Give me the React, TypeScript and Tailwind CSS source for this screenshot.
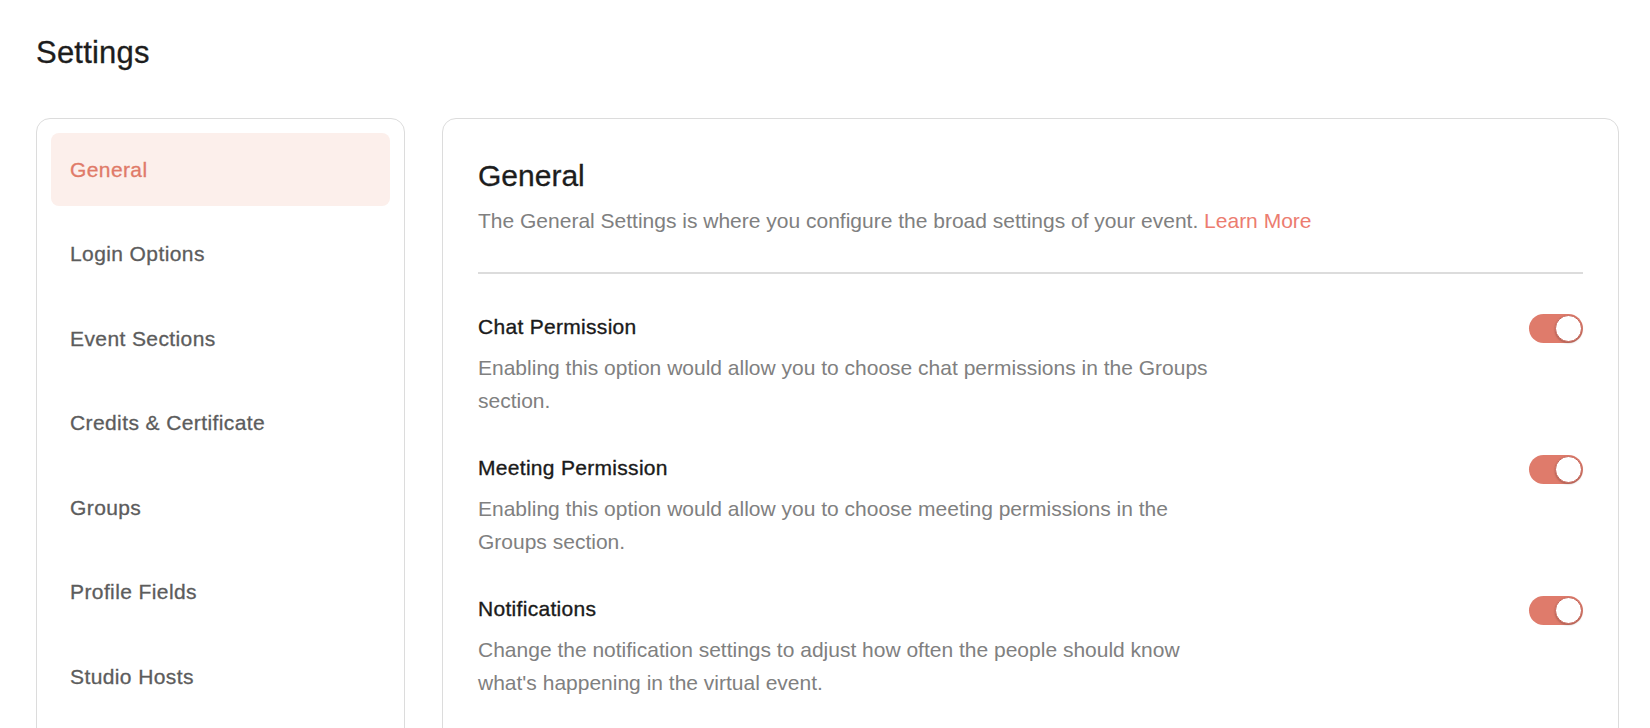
import React from "react";

const menu = [
  "General",
  "Login Options",
  "Event Sections",
  "Credits & Certificate",
  "Groups",
  "Profile Fields",
  "Studio Hosts",
];

const options = [
  {
    title: "Chat Permission",
    desc: "Enabling this option would allow you to choose chat permissions in the Groups section.",
  },
  {
    title: "Meeting Permission",
    desc: "Enabling this option would allow you to choose meeting permissions in the Groups section.",
  },
  {
    title: "Notifications",
    desc: "Change the notification settings to adjust how often the people should know what's happening in the virtual event.",
  },
];

const Toggle = () => (
  <div className="w-[54px] h-[29px] rounded-full bg-[#df7b6b] flex items-center justify-end pr-[1px] shrink-0">
    <div className="w-[27px] h-[27px] rounded-full bg-white border border-[#c9675a] shadow-[0_1px_2px_rgba(0,0,0,0.25)]" />
  </div>
);

const App = () => {
  return (
    <div className="h-[728px] overflow-hidden bg-white pl-[36px] pr-[31px] pt-[34px] font-['Liberation_Sans',Arial,sans-serif]">
      <h1 className="text-[31px] leading-[37px] text-[#1d1d1d] tracking-[0.2px] [-webkit-text-stroke:0.3px]">Settings</h1>

      <div className="flex gap-[37px] mt-[47px] items-start">
        {/* Sidebar */}
        <aside className="w-[369px] shrink-0 border border-[#dcdcdc] rounded-[14px] p-[14px] h-[640px]">
          <nav className="flex flex-col gap-[11.5px]">
            {menu.map((item, i) => (
              <div
                key={item}
                className={
                  i === 0
                    ? "h-[73px] rounded-[8px] bg-[#fcefeb] pl-[19px] flex items-center text-[21px] tracking-[0.4px] text-[#e07a68] [-webkit-text-stroke:0.3px]"
                    : "h-[73px] rounded-[8px] pl-[19px] flex items-center text-[21px] tracking-[0.4px] text-[#5c5c5c] [-webkit-text-stroke:0.3px]"
                }
              >
                {item}
              </div>
            ))}
          </nav>
        </aside>

        {/* Main panel */}
        <section className="flex-1 border border-[#dcdcdc] rounded-[14px] px-[35px] pt-[39px] h-[640px]">
          <h2 className="text-[30px] leading-[36px] text-[#1d1d1d] [-webkit-text-stroke:0.3px]">General</h2>
          <p className="mt-[13px] text-[21px] leading-[28px] text-[#808080]">
            The General Settings is where you configure the broad settings of your event.{" "}
            <span className="text-[#ec7c70]">Learn More</span>
          </p>
          <div className="mt-[37px] h-[2px] bg-[#dcdcdc]" />

          <div className="mt-[39px] flex flex-col gap-[37.5px]">
            {options.map((o) => (
              <div key={o.title} className="flex justify-between items-start">
                <div>
                  <h3 className="text-[21px] leading-[28px] tracking-[0.3px] text-[#1a1a1a] [-webkit-text-stroke:0.35px]">{o.title}</h3>
                  <p className="mt-[9.5px] max-w-[745px] text-[21px] leading-[33px] text-[#808080]">
                    {o.desc}
                  </p>
                </div>
                <div className="pt-[1px]">
                  <Toggle />
                </div>
              </div>
            ))}
          </div>
        </section>
      </div>
    </div>
  );
};

export default App;
